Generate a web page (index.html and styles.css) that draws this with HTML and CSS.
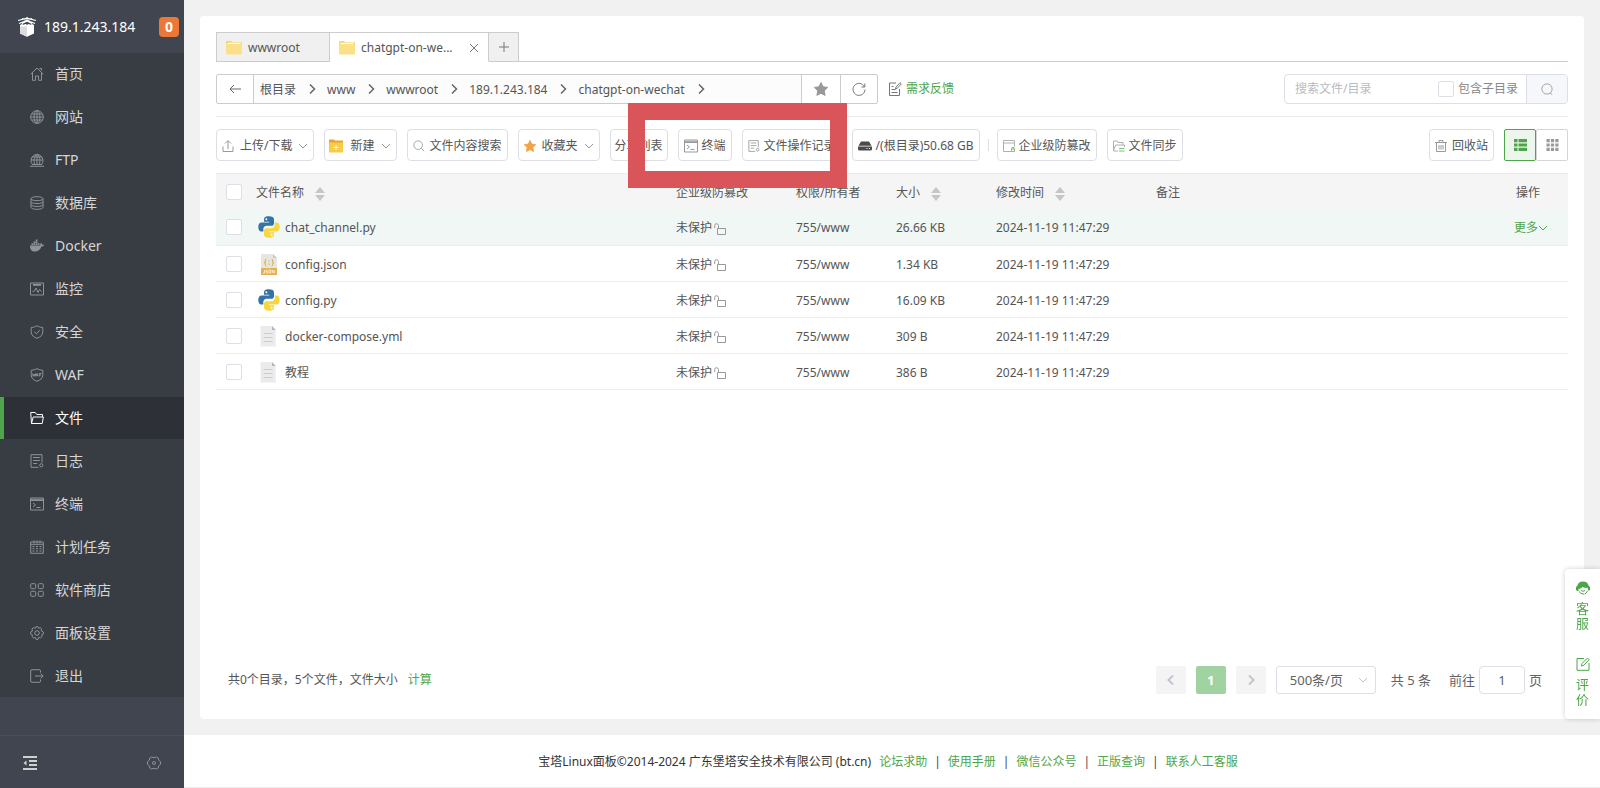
FILE: index.html
```html
<!DOCTYPE html>
<html lang="zh-CN">
<head>
<meta charset="utf-8">
<title>文件 - 宝塔Linux面板</title>
<link rel="stylesheet" href="styles.css">
</head>
<body>
<svg class="defs" aria-hidden="true">
  <symbol id="home" viewBox="0 0 14 14"><path d="M.7 7.200 7 1l6.300 6.200M2.500 6v7.300h3V9h3v4.300h3V6M9.500 1.500h2v2"/></symbol>
  <symbol id="globe" viewBox="0 0 14 14"><circle cx="7" cy="7" r="6.300"/><ellipse cx="7" cy="7" rx="3" ry="6.300"/><path d="M7 .7v12.600M.7 7h12.600M1.500 4h11M1.500 10h11"/></symbol>
  <symbol id="ftp" viewBox="0 0 14 14"><path d="M2.500 11.500a6 6 0 1 1 9 0M4.700 11.500C3.500 8 4 3 7 1c3 2 3.500 7 2.300 10.500M7 1v10.500M1 7h12M2 4h10M0 13.300h14M2 11.500h10"/></symbol>
  <symbol id="database" viewBox="0 0 14 14"><ellipse cx="7" cy="2.700" rx="6" ry="2"/><path d="M1 2.700v8.600c0 2.700 12 2.700 12 0V2.700M1 5.600c0 2.600 12 2.600 12 0M1 8.500c0 2.600 12 2.600 12 0"/></symbol>
  <symbol id="docker" viewBox="0 0 14 14"><path fill="currentColor" stroke="none" d="M0 6.500h10.300c-.4-1 0-2.200.7-2.700.7.500 1 1.200.9 1.900.7-.2 1.500-.1 2.100.3-.4 1-1.300 1.500-2.600 1.500C10.300 10.800 8 12.500 4.800 12.500 1.300 12.500-.1 10 0 6.500zM1.500 4.300h1.800V6H1.500zM3.700 4.300h1.700V6H3.700zM5.800 4.300h1.700V6H5.800zM8 4.300h1.500V6H8zM3.700 2.300h1.700v1.600H3.700zM5.800 2.300h1.700v1.600H5.800zM5.800.5h1.700v1.400H5.800z"/></symbol>
  <symbol id="monitor" viewBox="0 0 14 14"><path d="M.5 1h13v12H.5zM3 2.500h8M3 3.300h8M2.500 9.500 4.500 9l1.500-3 2 4.500 1.500-3 2 2"/></symbol>
  <symbol id="shield" viewBox="0 0 14 14"><path d="M7 .7c1.800 1.200 3.600 1.700 5.800 1.800v4.300c0 3.200-2.300 5.300-5.800 6.500C3.500 12.100 1.200 10 1.200 6.800V2.500C3.400 2.400 5.200 1.900 7 .7zM4.300 6.800l2.200 2 3.300-3.600"/></symbol>
  <symbol id="waf" viewBox="0 0 14 14"><path d="M7 .7c1.800 1 3.600 1.500 5.800 1.600v4.500c0 3.200-2.300 5.300-5.800 6.500C3.500 12.100 1.200 10 1.200 6.800V2.300C3.400 2.200 5.200 1.700 7 .7zM2.500 5.500l.8 2.800.9-2.300.9 2.300.6-2.800M6 8.300l1-2.800 1 2.800M6.400 7.500h1.300M9.200 8.500v-3h2.300M9.200 7h1.800"/></symbol>
  <symbol id="folder" viewBox="0 0 14 14"><path d="M1.500 12.500 .7 1.500h4.600l1.500 2h5.700V6M1.500 12.500h10.700L13.400 6H3.200z"/></symbol>
  <symbol id="log" viewBox="0 0 14 14"><path d="M8.500 13.300H1V.7h11v8M3.200 3.500h6.600M3.200 6.500h6.600M3.200 9.500h4"/><circle cx="11.300" cy="11.300" r="1.600"/></symbol>
  <symbol id="terminal" viewBox="0 0 14 14"><path d="M.5 1h13v12H.5zM.5 2.300h13M.5 3.500h13M3 6l2.500 2L3 10M6.500 10.500h4"/></symbol>
  <symbol id="calendar" viewBox="0 0 14 14"><path d="M.7 2h12.600v11.300H.7zM.7 4.300h12.600M4 .3v3M10 .3v3M7 .3v3M2.500 6.500h2M6 6.500h2M9.500 6.500h2M2.500 8.700h2M6 8.700h2M9.500 8.700h2M2.500 11h2M6 11h2M9.500 11h2"/></symbol>
  <symbol id="apps" viewBox="0 0 14 14"><rect x=".7" y=".7" width="5" height="5" rx="1"/><rect x="8.300" y=".7" width="5" height="5" rx="1"/><rect x=".7" y="8.300" width="5" height="5" rx="1"/><rect x="8.300" y="8.300" width="5" height="5" rx="1"/></symbol>
  <symbol id="gear" viewBox="0 0 14 14"><path d="M5.400 2.300 6 .7h2l.6 1.600 1.600-.7 1.500 1.400-.7 1.600L13.300 6v2l-1.600.8.4 1.700-1.500 1.300-1.700-.5L8 13.300H6l-.8-1.900-1.700.5L2 10.600l.4-1.800L.7 8V6l1.800-1-.6-1.900 1.500-1.400z"/><circle cx="7" cy="7" r="2.300"/></symbol>
  <symbol id="hexgear" viewBox="0 0 14 14"><path d="M4.500 1q2.500 1.500 5 0l1.700 1q-.3 2.500 2.300 3.700v2.600q-2.600 1.200-2.300 3.700l-1.700 1q-2.500-1.500-5 0l-1.700-1Q3.100 9.500.5 8.300V5.700Q3.100 4.500 2.800 2z"/><circle cx="7" cy="7" r="1.500"/></symbol>
  <symbol id="exit" viewBox="0 0 14 14"><path d="M10.500 3.500V2A1.300 1.300 0 0 0 9.200.7H2A1.300 1.300 0 0 0 .7 2v10A1.300 1.300 0 0 0 2 13.300h7.200a1.300 1.300 0 0 0 1.300-1.300v-1.500M5 7h8M10.700 4.500 13.200 7l-2.500 2.500"/></symbol>
  <symbol id="down" viewBox="0 0 10 10"><path d="M1 3l4 4 4-4"/></symbol>
  <symbol id="right" viewBox="0 0 10 10"><path d="M3 .5 7.500 5 3 9.500"/></symbol>
  <symbol id="left" viewBox="0 0 10 10"><path d="M7 .5 2.500 5 7 9.500"/></symbol>
  <symbol id="dir" viewBox="0 0 16 14"><path fill="#f5d36e" d="M0 1.200C0 .6.500 0 1.200 0h4l1 1.200H15q1 0 1 1V3H0z"/><path fill="#fbe08a" d="M0 3h16v9.500q0 1-1 1H1q-1 0-1-1z"/><path fill="#fff" d="M1.500 1.800h13V3h-13z"/></symbol>
  <symbol id="search" viewBox="0 0 14 14"><circle cx="6" cy="6" r="5"/><path d="M9.700 9.700 13 13"/></symbol>
  <symbol id="star" viewBox="0 0 14 14"><path d="M7 .5l2 4.300 4.700.6-3.400 3.300.8 4.700L7 11.200l-4.100 2.200.8-4.700L.3 5.400 5 4.800z"/></symbol>
  <symbol id="python" viewBox="0 0 22 22"><path fill="#3572a5" d="M10.800.3C6.800.3 6 2 6 3.500v2.200h5.200v.8H3.600C1.500 6.500.3 8.400.3 11s1.100 4.600 3 4.600h2V13c0-1.800 1.500-3.200 3.200-3.200h5c1.500 0 2.500-1.200 2.500-2.600V3.500C16 1.500 14.200.3 10.800.3z"/><circle cx="8.300" cy="3.200" r="1" fill="#fff"/><path fill="#f9d63f" d="M11.200 21.700c4 0 4.800-1.700 4.800-3.200v-2.200h-5.200v-.8h7.600c2.100 0 3.300-1.900 3.300-4.500s-1.100-4.600-3-4.600h-1.900V9c0 1.800-1.500 3.200-3.200 3.200h-5c-1.500 0-2.600 1.200-2.600 2.600v3.700c0 2 1.800 3.200 5.200 3.200z"/><circle cx="13.700" cy="18.800" r="1" fill="#fff"/></symbol>
  <symbol id="json" viewBox="0 0 22 22"><path fill="#e6e8df" d="M3 1h12l4 4v10H3z"/><path fill="#c9cbc0" d="M15 1v4h4z"/><path fill="#e9ae4f" d="M3 15h16v7H3z"/><path fill="none" stroke="#e5a64a" d="M8.500 6Q7 6 7.300 8T6 9.500q1.600 0 1.300 1.700T8.500 13M13.500 6q1.500 0 1.200 2T16 9.500q-1.600 0-1.300 1.700T13.500 13M11 7.500v1.300M11 10.500V12"/><path fill="none" stroke="#fff5df" stroke-width=".8" d="M6.500 17v3H5M9.500 17H8v1.500h1.500V20H7.800M11 17h1.800v3H11zM14.300 20v-3l2 3v-3"/></symbol>
  <symbol id="doc" viewBox="0 0 22 22"><path fill="#ebebeb" d="M2.500 1H14l3.700 4v16.500H2.500z"/><path fill="#b5b5b5" d="M14 1v4h3.700z"/><path stroke="#cdcdcd" d="M5.500 8.500h9M5.500 12.500h9M5.500 16.500h9"/></symbol>
  <symbol id="unlock" viewBox="0 0 12 12"><path d="M3.500 5.500h8v6h-8zM.7 5V2.500Q.7.700 2.500.7t2 1.800v3"/></symbol>
  <symbol id="sort" viewBox="0 0 10 14"><path fill="#c4c6ca" stroke="none" d="M5 0l5 6H0zM5 14 0 8h10z"/></symbol>
  <symbol id="edit" viewBox="0 0 14 14"><path d="M8 1.500H1v11.800h12V6M5.500 9l.5-2.500L11.500 1l1.700 1.700L7.800 8.300z"/></symbol>
</svg>
<div class="app">
  <aside class="side">
    <header class="brand">
      <svg class="logo" viewBox="0 0 18 20"><path fill="#fff" d="M2 8l2-1 1.500.8L7.300 7 9 7.800l1.700-.8 1.800.8L14 7l2 1v8.500L9 19.800l-7-3.300z"/><path fill="#dcdcdc" d="M2 9.500h7v10.300l-7-3.300z"/><path fill="none" stroke="#fff" stroke-width="1.200" d="M0 3.500 9 1.200l9 2.300M1 6.500l8-3 8 3M4 1.500l10 5M14 1.500l-10 5M9 0v5"/></svg>
      <span class="ip">189.1.243.184</span><span class="badge">0</span>
    </header>
    <nav class="menu">
      <a href="#"><svg class="ico"><use href="#home"/></svg>首页</a>
      <a href="#"><svg class="ico"><use href="#globe"/></svg>网站</a>
      <a href="#"><svg class="ico"><use href="#ftp"/></svg>FTP</a>
      <a href="#"><svg class="ico"><use href="#database"/></svg>数据库</a>
      <a href="#"><svg class="ico"><use href="#docker"/></svg>Docker</a>
      <a href="#"><svg class="ico"><use href="#monitor"/></svg>监控</a>
      <a href="#"><svg class="ico"><use href="#shield"/></svg>安全</a>
      <a href="#"><svg class="ico"><use href="#waf"/></svg>WAF</a>
      <a href="#" class="active"><svg class="ico"><use href="#folder"/></svg>文件</a>
      <a href="#"><svg class="ico"><use href="#log"/></svg>日志</a>
      <a href="#"><svg class="ico"><use href="#terminal"/></svg>终端</a>
      <a href="#"><svg class="ico"><use href="#calendar"/></svg>计划任务</a>
      <a href="#"><svg class="ico"><use href="#apps"/></svg>软件商店</a>
      <a href="#"><svg class="ico"><use href="#gear"/></svg>面板设置</a>
      <a href="#"><svg class="ico"><use href="#exit"/></svg>退出</a>
    </nav>
    <div class="side-foot">
      <button aria-label="收起菜单"><svg class="ico collapse" viewBox="0 0 14 14"><path d="M0 1h14M6 5h8M6 9h8M0 13h14"/><path d="M3.500 4.500v5L.5 7z" fill="currentColor" stroke="none"/></svg></button>
      <button aria-label="菜单设置"><svg class="ico"><use href="#hexgear"/></svg></button>
    </div>
  </aside>

  <div class="page">
    <main class="card">
      <div class="tabs">
        <button class="tab"><svg class="dir"><use href="#dir"/></svg>wwwroot</button>
        <button class="tab current"><svg class="dir"><use href="#dir"/></svg>chatgpt-on-we...<svg class="close" viewBox="0 0 10 10"><path d="M1 1l8 8M9 1 1 9"/></svg></button>
        <button class="tab plus" aria-label="新建标签"><svg class="close" viewBox="0 0 10 10"><path d="M5 0v10M0 5h10"/></svg></button>
      </div>

      <div class="pathrow">
        <div class="pathbar">
          <button class="back" aria-label="返回"><svg class="arrow" viewBox="0 0 12 10"><path d="M12 5H1M5 1 1 5l4 4"/></svg></button>
          <nav class="crumbs">
            <a href="#">根目录</a><svg class="chev"><use href="#right"/></svg>
            <a href="#">www</a><svg class="chev"><use href="#right"/></svg>
            <a href="#">wwwroot</a><svg class="chev"><use href="#right"/></svg>
            <a href="#">189.1.243.184</a><svg class="chev"><use href="#right"/></svg>
            <a href="#">chatgpt-on-wechat</a><svg class="chev"><use href="#right"/></svg>
          </nav>
          <button class="fav" aria-label="收藏"><svg class="g14 solid"><use href="#star"/></svg></button>
          <button class="reload" aria-label="刷新"><svg class="g14" viewBox="0 0 14 14"><path d="M12.500 5A6 6 0 1 0 13 7.500M12.800 1.500V5H9.500"/></svg></button>
        </div>
        <a class="feedback" href="#"><svg class="g14" viewBox="0 0 14 14"><path d="M8 1H1.500v12.500h10V7M3.500 7.500h4M3.500 10.500h6M3.500 4.500h2M7.500 7l.5-2L12 .7l1.300 1.200L9.300 6.300z"/></svg>需求反馈</a>
        <form class="search">
          <input class="query" type="text" placeholder="搜索文件/目录" aria-label="搜索文件/目录">
          <label class="sub"><input type="checkbox">包含子目录</label>
          <button type="button" aria-label="搜索"><svg class="g12" viewBox="0 0 14 14"><circle cx="7" cy="7" r="6"/><path d="M10.500 11.500 13 13.500"/></svg></button>
        </form>
      </div>

      <div class="tools">
        <button class="btn drop"><svg class="g12" viewBox="0 0 12 12"><path d="M1 6.500v5h10v-5M6 9V1M3 3.500l3-3 3 3"/></svg>上传/下载<svg class="dn"><use href="#down"/></svg></button>
        <button class="btn new"><svg class="g14" viewBox="0 0 14 14"><path fill="#e9a13b" stroke="none" d="M0 .5h5l1 1h8V5H0z"/><path fill="#f7cd45" stroke="none" d="M0 3.500h14v10H0z"/><path stroke="#fff" d="M7 6v5M4.500 8.500h5"/></svg>新建<svg class="dn"><use href="#down"/></svg></button>
        <button class="btn"><svg class="g12"><use href="#search"/></svg>文件内容搜索</button>
        <button class="btn drop"><svg class="g12 gold"><use href="#star"/></svg>收藏夹<svg class="dn"><use href="#down"/></svg></button>
        <button class="btn share">分享列表</button>
        <button class="btn"><svg class="g14"><use href="#terminal"/></svg>终端</button>
        <button class="btn"><svg class="g12"><use href="#log"/></svg>文件操作记录</button>
        <button class="btn"><svg class="g14" viewBox="0 0 14 14"><path fill="#4a4a4a" stroke="none" d="M3 2.500h8l2.500 4.200H.5zM0 7.500h14V10q0 1.500-1.500 1.500h-11Q0 11.500 0 10z"/><path stroke="#fff" d="M8.500 9.500h1M11 9.500h1"/></svg>/(根目录)50.68 GB</button>
        <span class="sep"></span>
        <button class="btn light"><svg class="g12" viewBox="0 0 12 12"><path d="M8 11.500H.5V.5h11v6M.5 3h11"/><path stroke="#7fc07c" d="M8.500 9h3v2.500h-3zM9 9V7.500h2V9"/></svg>企业级防篡改</button>
        <button class="btn light"><svg class="g12" viewBox="0 0 12 12"><path d="M5 11H.5V1H4l1 1.500h5V5M.7 10 2.500 5H11.500v2"/><path stroke="#7fc07c" d="M6 8.500h5.500M6 11h5.500"/></svg>文件同步</button>
        <button class="btn trash"><svg class="g12" viewBox="0 0 12 12"><path d="M0 2.500h12M4 2V.5h4V2M1.500 2.500v9h9v-9M4 5v4.500M6 5v4.500M8 5v4.500"/></svg>回收站</button>
        <div class="views">
          <button class="on" aria-label="列表视图"><svg class="v12" viewBox="0 0 13 12"><path d="M0 0h3.500v3.200H0zM4.500 0H13v3.200H4.500zM0 4.400h3.500v3.200H0zM4.500 4.400H13v3.200H4.500zM0 8.800h3.500V12H0zM4.500 8.800H13V12H4.500z"/></svg></button>
          <button aria-label="网格视图"><svg class="v12" viewBox="0 0 12 12"><path d="M0 0h3.200v3.200H0zM4.400 0h3.200v3.200H4.400zM8.800 0H12v3.200H8.800zM0 4.400h3.200v3.200H0zM4.400 4.400h3.200v3.200H4.400zM8.800 4.400H12v3.200H8.800zM0 8.800h3.200V12H0zM4.400 8.800h3.200V12H4.400zM8.800 8.800H12V12H8.800z"/></svg></button>
        </div>
        <div class="marker"></div>
      </div>

      <table class="files">
        <colgroup><col class="c-check"><col class="c-name"><col class="c-guard"><col class="c-size"><col class="c-size"><col class="c-date"><col><col class="c-op"></colgroup>
        <thead><tr><th><input type="checkbox" aria-label="全选"></th><th>文件名称<svg class="sort"><use href="#sort"/></svg></th><th>企业级防篡改</th><th>权限/所有者</th><th>大小<svg class="sort"><use href="#sort"/></svg></th><th>修改时间<svg class="sort"><use href="#sort"/></svg></th><th>备注</th><th>操作</th></tr></thead>
        <tbody>
          <tr class="hover"><td><input type="checkbox" aria-label="chat_channel.py"></td><td><span class="name"><svg class="type"><use href="#python"/></svg><span>chat_channel.py</span></span></td><td>未保护<svg class="lock"><use href="#unlock"/></svg></td><td>755/www</td><td>26.66 KB</td><td>2024-11-19 11:47:29</td><td></td><td><a class="more" href="#">更多<svg class="dn"><use href="#down"/></svg></a></td></tr>
          <tr><td><input type="checkbox" aria-label="config.json"></td><td><span class="name"><svg class="type"><use href="#json"/></svg><span>config.json</span></span></td><td>未保护<svg class="lock"><use href="#unlock"/></svg></td><td>755/www</td><td>1.34 KB</td><td>2024-11-19 11:47:29</td><td></td><td></td></tr>
          <tr><td><input type="checkbox" aria-label="config.py"></td><td><span class="name"><svg class="type"><use href="#python"/></svg><span>config.py</span></span></td><td>未保护<svg class="lock"><use href="#unlock"/></svg></td><td>755/www</td><td>16.09 KB</td><td>2024-11-19 11:47:29</td><td></td><td></td></tr>
          <tr><td><input type="checkbox" aria-label="docker-compose.yml"></td><td><span class="name"><svg class="type"><use href="#doc"/></svg><span>docker-compose.yml</span></span></td><td>未保护<svg class="lock"><use href="#unlock"/></svg></td><td>755/www</td><td>309 B</td><td>2024-11-19 11:47:29</td><td></td><td></td></tr>
          <tr><td><input type="checkbox" aria-label="教程"></td><td><span class="name"><svg class="type"><use href="#doc"/></svg><span>教程</span></span></td><td>未保护<svg class="lock"><use href="#unlock"/></svg></td><td>755/www</td><td>386 B</td><td>2024-11-19 11:47:29</td><td></td><td></td></tr>
        </tbody>
      </table>

      <div class="bottom">
        <div class="summary">共0个目录，5个文件，文件大小<a href="#">计算</a></div>
        <div class="pager">
          <button class="pg" aria-label="上一页"><svg class="chev"><use href="#left"/></svg></button>
          <button class="pg cur">1</button>
          <button class="pg" aria-label="下一页"><svg class="chev"><use href="#right"/></svg></button>
          <span class="size"><select aria-label="每页条数"><option>500条/页</option></select><svg class="dn"><use href="#down"/></svg></span>
          <span class="total">共 5 条</span>
          <label class="goto">前往<input type="text" value="1">页</label>
        </div>
      </div>
    </main>
    <footer class="foot">
      <span>宝塔Linux面板©2014-2024 广东堡塔安全技术有限公司 (bt.cn)</span>
      <nav><a href="#">论坛求助</a><a href="#">使用手册</a><a href="#">微信公众号</a><a href="#">正版查询</a><a href="#">联系人工客服</a></nav>
    </footer>
  </div>

  <div class="float">
    <a href="#"><svg class="g14" viewBox="0 0 14 14"><path fill="currentColor" stroke="none" d="M1.200 5A6 6 0 0 1 12.800 5L14 6v3l-1.500 1-1-3.200C9 7.200 7.500 6.500 6.500 6 5.500 7 4 8 2.500 8v2H1.200L0 9V6z"/><path d="M3 10.500q1.500 2.500 5 2.700M5 9.500q2 1.500 4 0M11.500 10q-1 2.500-3 3"/></svg><span>客服</span></a>
    <a href="#"><svg class="g14"><use href="#edit"/></svg><span>评价</span></a>
  </div>
</div>
</body>
</html>
```
FILE: styles.css
```css
* { box-sizing: border-box; }
body {
  margin: 0;
  background: #f1f1f1;
  color: #555;
  font: 12px/18px "Noto Sans", "Noto Sans CJK SC", sans-serif;
}
a { color: inherit; text-decoration: none; }
button, input, select { font: inherit; color: inherit; margin: 0; }
button { padding: 0; border: 0; background: none; display: flex; align-items: center; justify-content: center; }
svg { fill: none; stroke: currentColor; flex: none; overflow: visible; }
.defs { display: none; }
.app { display: flex; min-height: 100vh; }

/* sidebar */
.side { width: 184px; flex: none; display: flex; flex-direction: column; background: #40454f; }
.brand { height: 53px; display: flex; align-items: center; padding: 0 5px 0 18px; color: #fff; font-size: 14px; }
.logo { width: 18px; height: 20px; margin-right: 8px; stroke: none; }
.ip { flex: 1; }
.badge { width: 20px; height: 20px; border-radius: 4px; background: #ec7737; font-weight: 700; line-height: 20px; text-align: center; }
.menu { display: flex; flex-direction: column; gap: 1px; background: #383d44; }
.menu a {
  display: flex; align-items: center; height: 42px; padding-left: 26px;
  border-left: 4px solid transparent; color: #d6d6d6; font-size: 14px;
}
.menu .active { background: #2d3037; border-left-color: #4fa54a; color: #fff; }
.ico { width: 14px; height: 14px; color: #8f9296; }
.menu .ico { margin-right: 11px; }
.active .ico { color: #fff; }
.side-foot {
  display: flex; justify-content: space-between; align-items: center; height: 53px;
  margin-top: auto; padding: 2px 23px 0; border-top: 1px solid #4a505a;
}
.collapse { color: #d0d0d0; stroke-width: 2; }

/* page */
.page { flex: 1; min-width: 0; display: flex; flex-direction: column; }
.card { flex: 1; display: flex; flex-direction: column; margin: 16px; padding: 16px 16px 25px; background: #fff; border-radius: 4px; }
.foot {
  display: flex; justify-content: center; align-items: center; gap: 8px; height: 53px; padding: 2px 8px 0 0;
  background: #fff; border-bottom: 1px solid #ebebeb; color: #333;
}
.foot nav { display: flex; color: #4fa54a; }
.foot nav a + a::before { content: "|"; color: #444; margin: 0 7px; }

.tabs { display: flex; border-bottom: 1px solid #ccc; height: 30px; }
.tab { width: 114px; height: 30px; border: 1px solid #ccc; background: #f0f0f0; padding: 1px 9px 0; justify-content: flex-start; }
.tab + .tab { border-left: 0; }
.tab.current { width: 159px; background: #fff; border-bottom-color: #fff; }
.tab.plus { width: 30px; padding: 0; justify-content: center; }
.dir { width: 16px; height: 14px; margin-right: 6px; stroke: none; }
.close { width: 10px; height: 10px; color: #777; }
.current .close { margin-left: auto; }

.pathrow { display: flex; align-items: center; padding: 12px 0; border-bottom: 1px solid #ebebeb; }
.pathbar { display: flex; width: 662px; height: 30px; border: 1px solid #ccc; border-radius: 2px; }
.back { width: 37px; border-right: 1px solid #ccc; color: #666; }
.arrow { width: 12px; height: 10px; }
.crumbs { flex: 1; display: flex; align-items: center; background: #fcfcfc; }
.crumbs a { padding: 2px 7px 0 6px; }
.chev { width: 10px; height: 10px; stroke-width: 2; }
.crumbs .chev { margin: 0 4px; color: #666; stroke-width: 1.500; }
.fav { width: 39px; border-left: 1px solid #ccc; color: #999; }
.reload { width: 37px; border-left: 1px solid #ccc; color: #777; }
.g14 { width: 14px; height: 14px; }
.g12 { width: 12px; height: 12px; }
.solid { fill: currentColor; }
.feedback { display: flex; align-items: center; gap: 4px; margin-left: 10px; color: #4fa54a; }
.feedback svg { color: #777; }
.search { display: flex; align-items: center; width: 284px; height: 30px; margin-left: auto; border: 1px solid #dcdfe6; border-radius: 4px; color: #888; }
.query { flex: 1; min-width: 0; border: 0; outline: 0; padding: 0 10px; background: none; }
.query::placeholder { color: #b8bbc0; }
.sub { display: flex; align-items: center; gap: 4px; margin-right: 8px; }
.search button { width: 41px; height: 28px; border-left: 1px solid #dcdfe6; background: #f5f7fa; color: #999; border-radius: 0 3px 3px 0; }
input[type="checkbox"] { appearance: none; display: block; width: 16px; height: 16px; border: 1px solid #dcdfe6; border-radius: 2px; background: #fff; }

.tools { position: relative; display: flex; align-items: center; gap: 10px; padding: 12px 0; }
.btn { height: 32px; padding: 1px 5px 0; gap: 4px; border: 1px solid #dcdfe6; border-radius: 4px; background: #fff; white-space: nowrap; }
.btn svg { color: #999; }
.btn.light svg { color: #b0b0b0; }
.btn.drop { gap: 6px; }
.btn.new { gap: 7px; padding-left: 4px; }
.btn.share { padding: 1px 4px 0; }
.btn.trash { gap: 5px; margin-left: auto; }
.btn .gold { fill: #efa544; stroke: #efa544; }
.dn { width: 10px; height: 10px; }
.sep { width: 1px; height: 12px; margin: 0 -2px; background: #dcdfe6; }
.views { display: flex; }
.views button { width: 32px; height: 32px; border: 1px solid #d6d6d6; border-radius: 2px; color: #999; }
.views .on { border-color: #4fa54a; background: #edf6ed; color: #4fa54a; }
.v12 { width: 13px; height: 12px; fill: currentColor; stroke: none; }
/* highlight frame drawn over the toolbar */
.marker { position: absolute; left: 412px; top: -14px; width: 219px; height: 85px; border: 17px solid #da5559; pointer-events: none; }

.files { width: 100%; table-layout: fixed; border-collapse: collapse; text-align: left; }
.c-check { width: 32px; }
.c-name { width: 420px; }
.c-guard { width: 120px; }
.c-size { width: 100px; }
.c-date { width: 160px; }
.c-op { width: 62px; }
th, td { height: 36px; padding: 2px 8px 0; font-weight: 400; border-bottom: 1px solid #ebeef0; white-space: nowrap; }
th:first-child, td:first-child { padding: 0 0 0 10px; }
th { background: #f5f5f5; border-top: 1px solid #ebebeb; border-bottom: 0; }
th:last-child { padding-left: 10px; }
td:nth-child(2) { padding-top: 0; }
.hover { background: #f0f7f5; }
.sort { width: 10px; height: 14px; margin-left: 11px; vertical-align: middle; }
.name { display: flex; align-items: center; gap: 5px; padding-left: 2px; }
.name span { padding-top: 2px; }
.type { width: 22px; height: 22px; stroke: none; }
.lock { width: 12px; height: 12px; margin-left: 2px; vertical-align: middle; color: #999; }
.more { display: flex; align-items: center; color: #4fa54a; }

.bottom { display: flex; align-items: center; justify-content: space-between; margin-top: auto; padding: 0 26px 0 12px; }
.summary a { margin-left: 10px; color: #4fa54a; }
.pager { display: flex; align-items: center; font-size: 13px; color: #606266; }
.pg { width: 30px; height: 28px; margin-right: 10px; border-radius: 2px; background: #f4f4f5; color: #c0c4cc; }
.pg.cur { background: #a0d2a2; color: #fff; font-weight: 700; }
.size { position: relative; width: 100px; }
.size select { appearance: none; width: 100%; height: 28px; padding: 0 13px; border: 1px solid #dcdfe6; border-radius: 3px; background: #fff; }
.size .dn { position: absolute; right: 8px; top: 9px; color: #c0c4cc; }
.total { margin: 0 18px 0 15px; }
.goto { display: flex; align-items: center; gap: 4px; }
.goto input { width: 46px; height: 28px; border: 1px solid #dcdfe6; border-radius: 4px; text-align: center; }

.float {
  position: fixed; right: 0; bottom: 69px; width: 35px; padding: 12px 0; display: flex; flex-direction: column; gap: 26px;
  background: #fff; border-radius: 4px 0 0 4px; box-shadow: 0 0 5px rgba(0, 0, 0, .2); color: #4fa54a;
}
.float a { display: flex; flex-direction: column; align-items: center; gap: 6px; font-size: 13px; line-height: 15px; }
.float span { width: 13px; }
```
